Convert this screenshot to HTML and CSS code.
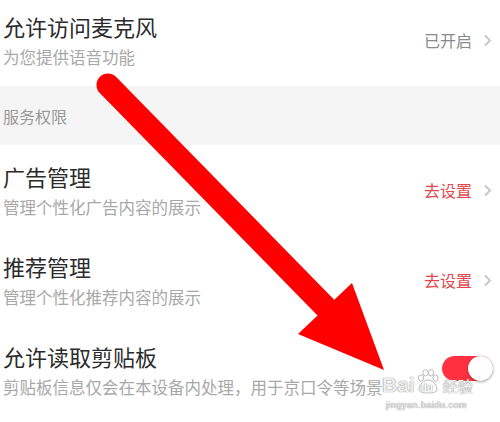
FILE: index.html
```html
<!DOCTYPE html>
<html lang="zh-CN">
<head>
    <meta charset="UTF-8">
    <meta name="viewport" content="width=device-width, initial-scale=1.0">
    <title>隐私设置</title>
    <link rel="stylesheet" href="styles.css">
</head>
<body>
    <div class="page">
        <div class="list">
            <div class="row first">
                <div class="info">
                    <div class="title">允许访问麦克风</div>
                    <div class="desc">为您提供语音功能</div>
                </div>
                <div class="action">
                    <span class="state">已开启</span>
                    <svg class="chevron" width="9" height="13" viewBox="0 0 9 13"><polyline points="2,1.5 7,6.5 2,11.5" fill="none" stroke="#c8c8c8" stroke-width="2"/></svg>
                </div>
            </div>

            <div class="section">服务权限</div>

            <div class="row">
                <div class="info">
                    <div class="title">广告管理</div>
                    <div class="desc">管理个性化广告内容的展示</div>
                </div>
                <div class="action">
                    <span class="state link">去设置</span>
                    <svg class="chevron" width="9" height="13" viewBox="0 0 9 13"><polyline points="2,1.5 7,6.5 2,11.5" fill="none" stroke="#c8c8c8" stroke-width="2"/></svg>
                </div>
            </div>

            <div class="row">
                <div class="info">
                    <div class="title">推荐管理</div>
                    <div class="desc">管理个性化推荐内容的展示</div>
                </div>
                <div class="action">
                    <span class="state link">去设置</span>
                    <svg class="chevron" width="9" height="13" viewBox="0 0 9 13"><polyline points="2,1.5 7,6.5 2,11.5" fill="none" stroke="#c8c8c8" stroke-width="2"/></svg>
                </div>
            </div>

            <div class="row last">
                <div class="info">
                    <div class="title">允许读取剪贴板</div>
                    <div class="desc">剪贴板信息仅会在本设备内处理，用于京口令等场景</div>
                </div>
                <div class="toggle on"><span class="knob"></span></div>
            </div>
        </div>

        <!-- annotation drawn over the screenshot -->
        <svg class="arrow" width="500" height="422" viewBox="0 0 500 422">
            <line x1="108" y1="85" x2="336" y2="318" stroke="#ff0000" stroke-width="23" stroke-linecap="round"/>
            <polygon points="352,283 384,370 298,334" fill="#ff0000"/>
        </svg>

        <div class="watermark">
            <div class="wm-logo">
                <span>Bai</span>
                <span class="paw">
                    <svg width="24" height="26" viewBox="0 0 24 26">
                        <g fill="rgba(255,255,255,0.85)" stroke="#bbb" stroke-width="1">
                            <ellipse cx="5" cy="9" rx="2.6" ry="3.2"/>
                            <ellipse cx="9.5" cy="3.8" rx="2.6" ry="3.2"/>
                            <ellipse cx="15" cy="3.8" rx="2.6" ry="3.2"/>
                            <ellipse cx="19.5" cy="9" rx="2.6" ry="3.2"/>
                            <path d="M3,21 C3,15 8,11 12,11 C16,11 21,15 21,21 C21,25 3,25 3,21 Z"/>
                        </g>
                    </svg>
                    <span class="paw-text">du</span>
                </span>
                <span class="wm-cn">经验</span>
            </div>
            <div class="wm-url">jingyan.baidu.com</div>
        </div>
    </div>
</body>
</html>
```

FILE: styles.css
```css
body {
    margin: 0;
    background-color: #fff;
    font-family: "Noto Sans CJK SC", "Noto Sans", sans-serif;
    color: #333;
}

.page {
    position: relative;
    width: 500px;
    height: 422px;
    overflow: hidden;
}

.list {
    margin-top: -5px;
}

.row {
    display: flex;
    align-items: center;
    justify-content: space-between;
    height: 90px;
    padding: 0 8px 0 3px;
}

.info {
    display: flex;
    flex-direction: column;
    gap: 8px;
}

.title {
    font-size: 22px;
    line-height: 26px;
    color: #2b2b2b;
}

.desc {
    font-size: 16.5px;
    line-height: 20px;
    color: #a8a8a8;
    white-space: nowrap;
}

.action {
    display: flex;
    align-items: center;
    gap: 11px;
}

.state {
    font-size: 16px;
    line-height: 20px;
    color: #8a8a8a;
}

.state.link {
    color: #e2474c;
}

.chevron {
    display: block;
}

.section {
    height: 59px;
    display: flex;
    align-items: center;
    padding: 0 3px;
    margin-top: 1px;
    background-color: #f5f5f5;
    font-size: 16px;
    color: #9a9a9a;
}

.row.last {
    padding-right: 7px;
}

.toggle {
    display: flex;
    justify-content: flex-end;
    width: 51px;
    height: 25px;
    border-radius: 13px;
    background-color: #ff3140;
    margin-top: -4px;
}

.knob {
    width: 25px;
    height: 25px;
    border-radius: 50%;
    background-color: #fff;
    box-shadow: 0 1px 3px rgba(0, 0, 0, 0.35);
}

.arrow {
    position: absolute;
    left: 0;
    top: 0;
}

/* baidu jingyan watermark */
.watermark {
    position: absolute;
    left: 382px;
    top: 367px;
    font-family: "Liberation Sans", sans-serif;
    color: rgba(255, 255, 255, 0.85);
    text-shadow: 0 0 1px #888, 0 0 1px #999;
}

.wm-logo {
    display: flex;
    align-items: flex-end;
    height: 28px;
    font-size: 21px;
    line-height: 21px;
    font-weight: bold;
}

.paw {
    position: relative;
    width: 24px;
    height: 26px;
    margin: 0 1px;
}

.paw svg {
    display: block;
}

.paw-text {
    position: absolute;
    left: 5px;
    bottom: 2px;
    font-size: 10px;
    line-height: 10px;
    color: #fff;
}

.wm-cn {
    font-family: "Noto Sans CJK SC", sans-serif;
    font-size: 15px;
    font-weight: normal;
    line-height: 18px;
    margin-left: 2px;
}

.wm-url {
    font-size: 9px;
    line-height: 12px;
    margin-top: 4px;
    margin-left: 4px;
    letter-spacing: 0.5px;
}
```
